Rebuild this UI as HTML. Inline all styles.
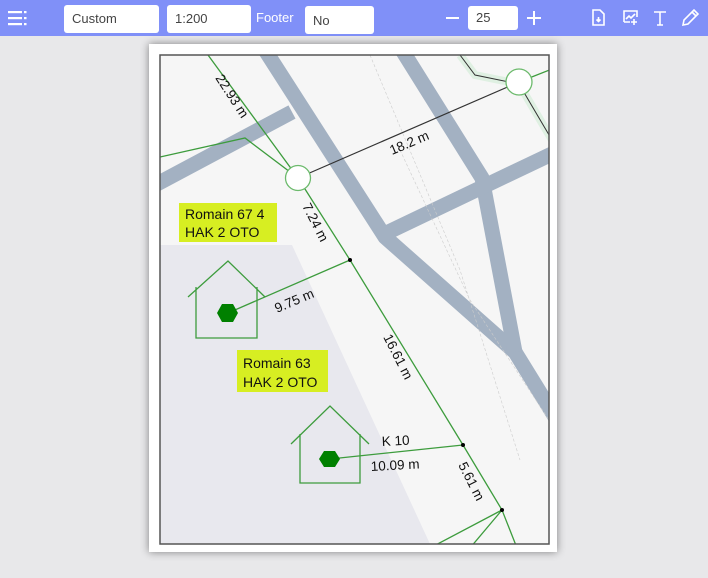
<!DOCTYPE html>
<html><head><meta charset="utf-8"><style>
body{margin:0;width:708px;height:578px;background:#e8e8ea;font-family:"Liberation Sans",sans-serif;position:relative;overflow:hidden}
.tb{position:absolute;left:0;top:0;width:708px;height:36px;background:#8090f8}
.in{position:absolute;background:#fff;border-radius:3px;font-size:13px;color:#444;box-sizing:border-box;padding-left:8px;line-height:28px}
.page{position:absolute;left:149px;top:44px;width:408px;height:508px;background:#fff;box-shadow:0 0 8px rgba(0,0,0,.45)}
</style></head><body>
<div class="tb">
<svg style="position:absolute;left:8px;top:10px" width="22" height="16"><g fill="#fff"><rect x="0" y="1" width="14" height="2.2"/><rect x="0" y="7" width="14" height="2.2"/><rect x="0" y="13" width="14" height="2.2"/><rect x="16" y="1" width="2.5" height="2.2"/><rect x="16" y="7" width="2.5" height="2.2"/><rect x="16" y="13" width="2.5" height="2.2"/></g></svg>
<div class="in" style="left:64px;top:5px;width:95px;height:28px">Custom</div>
<div class="in" style="left:167px;top:5px;width:84px;height:28px">1:200</div>
<div style="position:absolute;left:256px;top:10px;color:#fff;font-size:13px">Footer</div>
<div class="in" style="left:305px;top:6px;width:69px;height:28px;line-height:30px">No</div>
<div style="position:absolute;left:446px;top:17px;width:13px;height:2px;background:#fff"></div>
<div class="in" style="left:468px;top:6px;width:50px;height:24px;line-height:24px">25</div>
<svg style="position:absolute;left:526px;top:10px" width="16" height="16"><path d="M8 1V15M1 8H15" stroke="#fff" stroke-width="2"/></svg>
<svg style="position:absolute;left:590px;top:8px;fill:none;stroke:#fff;stroke-width:1.6" width="110" height="20">
<path d="M3 2H10L14 6V17H3Z"/><path d="M8.5 9V13M6.5 11.5L8.5 13.5L10.5 11.5"/>
<path d="M34 14V3H47V9M34 14H40M36 11L39 8L41 10L45 6M44 11V17M41 14H47"/>
<path d="M64 4H76M70 4V17M67 17H73"/>
<path d="M93 17L94 12L104 2L108 6L98 16ZM102 4L106 8"/>
</svg>
</div>
<div class="page"></div>
<svg style="position:absolute;left:0;top:0" width="708" height="578">
<defs><clipPath id="c"><rect x="160" y="55" width="389" height="489"/></clipPath></defs>
<g clip-path="url(#c)">
<rect x="160" y="55" width="389" height="489" fill="#f6f6f6"/>
<polygon points="160,245 292,245 430,544 160,544" fill="#e8e8ee"/>
<g stroke="#a3b1c2" stroke-width="15" fill="none" stroke-linejoin="round">
<path d="M265,50 L385,237 L515,352 L560,425"/>
<path d="M402,50 L482,178 L515,352"/>
<path d="M155,185 L292,112"/>
<path d="M380,236 L560,150"/>
</g>
<path d="M370,55 L460,270 L520,460M400,150 L470,300 L549,420" stroke="#ccc" stroke-width="0.6" stroke-dasharray="3,2" fill="none"/>
<path d="M460,55 L475,75 L519,84 L552,140" stroke="#dff0e2" stroke-width="8" fill="none"/>
<path d="M460,55 L475,75 L519,84 L552,140" stroke="#333" stroke-width="1" fill="none"/>
<path d="M298,178 L519,82" stroke="#333" stroke-width="1.2"/>
<g stroke="#3d9c3d" stroke-width="1.3" fill="none">
<path d="M208,55 L298,178 L350,260 L463,445 L502,510 L517,548"/>
<path d="M160,157 L245,138 L298,178"/>
<path d="M350,260 L228,313"/><path d="M463,445 L330,459"/>
<path d="M502,510 L430,548M502,510 L470,548M519,82 L552,69"/>
<path d="M188,297 L228,261 L265,297M196,287 V338 H257 V287"/>
<path d="M291,444 L330,406 L369,444M300,434 V483 H360 V434"/>
</g>
<circle cx="298" cy="178" r="12.5" fill="#fff" stroke="#6cba6c" stroke-width="1.3"/>
<circle cx="519" cy="82" r="13" fill="#fff" stroke="#6cba6c" stroke-width="1.3"/>
<g fill="#000"><circle cx="350" cy="260" r="2"/><circle cx="463" cy="445" r="2"/><circle cx="502" cy="510" r="2"/></g>
<polygon points="217,313 222,304 233,304 238,313 233,322 222,322" fill="#008000"/>
<polygon points="319,459 324,451 335,451 340,459 335,467 324,467" fill="#008000"/>
<rect x="179" y="203" width="98" height="39" fill="#d7ee22"/>
<rect x="237" y="350" width="91" height="42" fill="#d7ee22"/>
<g font-size="14" fill="#111" font-family="Liberation Sans,sans-serif">
<text x="185" y="219">Romain 67 4</text><text x="185" y="237">HAK 2 OTO</text>
<text x="243" y="368">Romain 63</text><text x="243" y="387">HAK 2 OTO</text>
</g>
<g font-size="13.5" fill="#111" font-family="Liberation Sans,sans-serif">
<text transform="translate(215,78) rotate(57)">22.93 m</text>
<text transform="translate(392,155) rotate(-23)">18.2 m</text>
<text transform="translate(302,206) rotate(63)">7.24 m</text>
<text transform="translate(277,313) rotate(-23)">9.75 m</text>
<text transform="translate(383,337) rotate(63)">16.61 m</text>
<text transform="translate(382,446) rotate(-3)">K 10</text>
<text transform="translate(371,471) rotate(-3)">10.09 m</text>
<text transform="translate(458,465) rotate(63)">5.61 m</text>
</g>
</g>
<rect x="160" y="55" width="389" height="489" fill="none" stroke="#555" stroke-width="1.5"/>
</svg>
</body></html>
